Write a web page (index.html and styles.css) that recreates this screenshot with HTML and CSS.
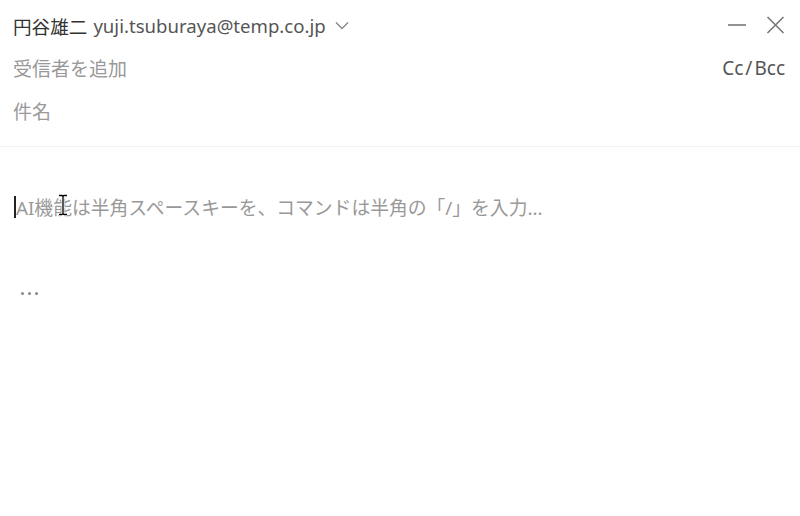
FILE: index.html
```html
<!DOCTYPE html>
<html lang="ja">
<head>
<meta charset="utf-8">
<link rel="stylesheet" href="styles.css">
</head>
<body>
<div class="compose">
  <div class="header">
    <div class="row row-from">
      <div class="from">
        <span class="name">円谷雄二</span>
        <span class="addr">yuji.tsuburaya@temp.co.jp</span>
        <svg class="chev" width="14" height="9" viewBox="0 0 14 9"><path d="M1 1.5 L7 7.5 L13 1.5" fill="none" stroke="#888" stroke-width="1.4"/></svg>
      </div>
      <div class="actions">
        <svg class="icon" width="20" height="20" viewBox="0 0 20 20"><path d="M1 10 H19" stroke="#777" stroke-width="1.6"/></svg>
        <svg class="icon" width="20" height="20" viewBox="0 0 20 20"><path d="M2.5 2 L18.5 18 M18.5 2 L2.5 18" stroke="#777" stroke-width="1.6"/></svg>
      </div>
    </div>
    <div class="row row-to">
      <span class="placeholder">受信者を追加</span>
      <span class="ccbcc">Cc<span class="slash">/</span>Bcc</span>
    </div>
    <div class="row row-subject">
      <span class="placeholder">件名</span>
    </div>
  </div>
  <div class="body">
    <div class="editor">
      <span class="caret"></span><span class="hint">AI機能は半角スペースキーを、コマンドは半角の「/」を入力...</span>
      <svg class="ibeam" width="10" height="22" viewBox="0 0 10 22"><path d="M1 1.5 H4 Q5 1.5 5 3 V19 Q5 20.5 4 20.5 H1 M9 1.5 H6 Q5 1.5 5 3 M5 19 Q5 20.5 6 20.5 H9" fill="none" stroke="#fff" stroke-width="3"/><path d="M1 1.5 H4 Q5 1.5 5 3 V19 Q5 20.5 4 20.5 H1 M9 1.5 H6 Q5 1.5 5 3 M5 19 Q5 20.5 6 20.5 H9" fill="none" stroke="#000" stroke-width="1.3"/></svg>
    </div>
    <div class="more"><span></span><span></span><span></span></div>
  </div>
</div>
</body>
</html>
```
FILE: styles.css
```css
html, body {
  margin: 0;
  padding: 0;
  background: #fff;
}
body {
  font-family: "Noto Sans", "Noto Sans CJK JP", sans-serif;
  color: #333;
}
.compose {
  width: 800px;
  height: 516px;
}
.header {
  padding: 0 15px 13px 13px;
  border-bottom: 1px solid #f2f2f2;
}
.row {
  display: flex;
  align-items: center;
  justify-content: space-between;
  height: 43.5px;
}
.row-from {
  height: 46px;
  margin-top: 2px;
  margin-bottom: -2px;
}
.from {
  display: flex;
  align-items: center;
  font-size: 18.6px;
  color: #333;
}
.name {
  margin-right: 6px;
}
.addr {
  color: #555;
}
.chev {
  margin-left: 9px;
  margin-top: 1px;
}
.actions {
  display: flex;
  align-items: center;
  gap: 18px;
  margin-right: 0;
}
.placeholder {
  font-size: 19px;
  color: #999;
}
.ccbcc {
  font-size: 19px;
  color: #555;
}
.slash {
  margin: 0 2px;
}
.body {
  padding: 0 0 0 14px;
}
.editor {
  position: relative;
  display: flex;
  align-items: center;
  margin-top: 48px;
  height: 24px;
}
.caret {
  display: inline-block;
  width: 2px;
  height: 22px;
  background: #222;
}
.hint {
  font-size: 18.8px;
  color: #999;
}
.ibeam {
  position: absolute;
  left: 44px;
  top: -1px;
}
.more {
  display: flex;
  gap: 4px;
  margin-top: 73px;
  margin-left: 7px;
}
.more span {
  width: 3px;
  height: 3px;
  border-radius: 50%;
  background: #888;
}
```
